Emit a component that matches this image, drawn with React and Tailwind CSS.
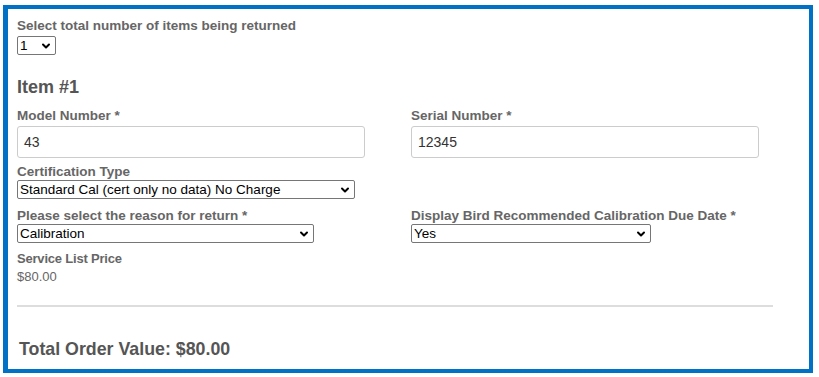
import { ChevronDown } from 'lucide-react';

const Label = ({ children, className = '' }) => (
  <label className={`block text-[13.5px] leading-[15px] font-bold text-[#666] ${className}`}>{children}</label>
);

const Select = ({ value, className = '' }) => (
  <div
    className={`flex items-center justify-between h-[19px] border border-[#767676] rounded-[2px] bg-white pl-[2px] pr-[3px] text-[13.5px] leading-none text-black ${className}`}
  >
    <span>{value}</span>
    <ChevronDown className="w-[12px] h-[12px]" strokeWidth={4} />
  </div>
);

const TextInput = ({ value }) => (
  <div className="h-[32px] w-[348px] border border-[#ccc] rounded-[3px] bg-white px-[6px] flex items-center text-[14px] text-[#333]">
    {value}
  </div>
);

export default function App() {
  return (
    <div className="w-[819px] h-[377px] bg-white pt-[5px] pl-[3px] font-['Liberation_Sans',Arial,sans-serif]">
      <div className="w-[810px] h-[368px] border-[4px] border-l-[5px] border-[#0071c5] pl-[9px] pt-[9px]">
        <Label>Select total number of items being returned</Label>
        <Select value="1" className="w-[39px] mt-[3px]" />

        <h2 className="text-[18px] leading-[20px] font-bold text-[#555] mt-[22px]">Item #1</h2>

        <div className="grid grid-cols-[394px_1fr] mt-[11px]">
          <div>
            <Label>Model Number *</Label>
            <div className="mt-[3px]">
              <TextInput value="43" />
            </div>
          </div>
          <div>
            <Label>Serial Number *</Label>
            <div className="mt-[3px]">
              <TextInput value="12345" />
            </div>
          </div>
        </div>

        <Label className="mt-[6px]">Certification Type</Label>
        <Select value="Standard Cal (cert only no data) No Charge" className="w-[338px] mt-[1px]" />

        <div className="grid grid-cols-[394px_1fr] mt-[9px]">
          <div>
            <Label>Please select the reason for return *</Label>
            <Select value="Calibration" className="w-[297px] mt-[1px]" />
          </div>
          <div>
            <Label>Display Bird Recommended Calibration Due Date *</Label>
            <Select value="Yes" className="w-[240px] mt-[1px]" />
          </div>
        </div>

        <div className="mt-[8px] text-[13px] leading-[16px] font-bold text-[#666] tracking-[-0.2px]">Service List Price</div>
        <div className="mt-[2px] text-[13px] leading-[16px] text-[#666]">$80.00</div>

        <hr className="w-[756px] border-0 border-t-2 border-[#ddd] mt-[20px]" />

        <div className="mt-[32px] ml-[2px] text-[17.8px] leading-[20px] font-bold text-[#555]">Total Order Value: $80.00</div>
      </div>
    </div>
  );
}
